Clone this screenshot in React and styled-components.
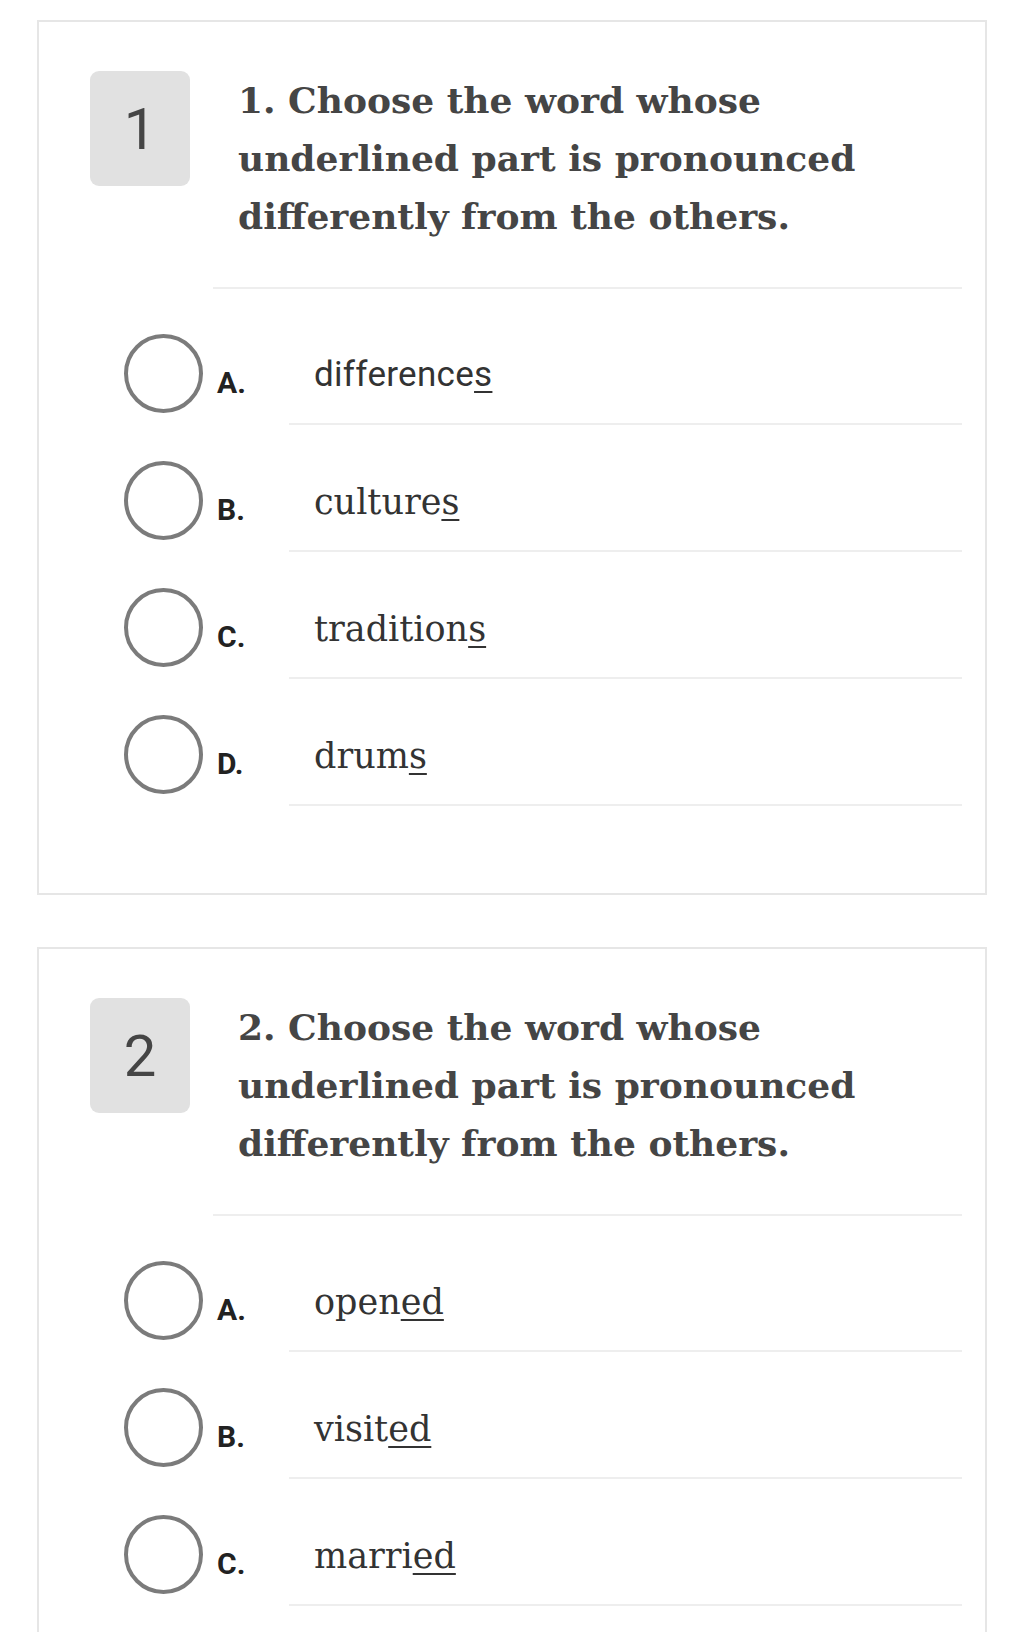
import React from "react";
import styled, { createGlobalStyle } from "styled-components";

const questions = [
  {
    num: 1,
    text: "1. Choose the word whose underlined part is pronounced differently from the others.",
    options: [
      { key: "A", base: "difference", mark: "s", sans: true },
      { key: "B", base: "culture", mark: "s" },
      { key: "C", base: "tradition", mark: "s" },
      { key: "D", base: "drum", mark: "s" },
    ],
  },
  {
    num: 2,
    text: "2. Choose the word whose underlined part is pronounced differently from the others.",
    options: [
      { key: "A", base: "open", mark: "ed" },
      { key: "B", base: "visit", mark: "ed" },
      { key: "C", base: "marri", mark: "ed" },
    ],
  },
];

function App() {
  return (
    <>
      <GlobalStyle />
      <Page>
        {questions.map((q) => (
          <Card key={q.num}>
            <Header>
              <Badge>{q.num}</Badge>
              <QuestionBlock>
                <QuestionText>{q.text}</QuestionText>
              </QuestionBlock>
            </Header>
            <OptionList>
              {q.options.map((o) => (
                <OptionRow key={o.key}>
                  <Radio />
                  <Letter>{o.key}.</Letter>
                  <OptionBody>
                    <OptionText $sans={o.sans}>
                      {o.base}
                      <Mark>{o.mark}</Mark>
                    </OptionText>
                  </OptionBody>
                </OptionRow>
              ))}
            </OptionList>
          </Card>
        ))}
      </Page>
    </>
  );
}

export default App;

const GlobalStyle = createGlobalStyle`
  body {
    margin: 0;
    background: #ffffff;
    font-family: Roboto, "Liberation Sans", sans-serif;
  }
`;

const Page = styled.div`
  display: flex;
  flex-direction: column;
  gap: 52px;
  padding: 20px 37px 0 37px;
`;

const Card = styled.div`
  border: 2px solid #e6e6e6;
  padding: 49px 23px 87px 51px;
`;

const Header = styled.div`
  display: flex;
  gap: 23px;
`;

const Badge = styled.div`
  flex: none;
  width: 100px;
  height: 115px;
  border-radius: 9px;
  background: #e1e1e1;
  color: #454545;
  font-family: Roboto, sans-serif;
  font-weight: 400;
  font-size: 58px;
  display: flex;
  align-items: center;
  justify-content: center;
`;

const QuestionBlock = styled.div`
  flex: 1;
  padding: 0 0 42px 25px;
  border-bottom: 2px solid #eeeeee;
`;

const QuestionText = styled.div`
  font-family: "DejaVu Serif", serif;
  font-weight: bold;
  font-size: 36px;
  line-height: 58px;
  color: #454545;
`;

const OptionList = styled.div`
  display: flex;
  flex-direction: column;
  margin: 9px 0 0 34px;
`;

const OptionRow = styled.div`
  display: flex;
  align-items: flex-start;
`;

const Radio = styled.div`
  flex: none;
  box-sizing: border-box;
  width: 79px;
  height: 79px;
  margin-top: 36px;
  border: 4px solid #7b7b7b;
  border-radius: 50%;
`;

const Letter = styled.div`
  flex: none;
  width: 86px;
  box-sizing: border-box;
  padding: 65px 0 0 14px;
  font-family: Roboto, sans-serif;
  font-weight: bold;
  font-size: 30px;
  line-height: 40px;
  color: #222222;
`;

const OptionBody = styled.div`
  flex: 1;
  padding: 57px 0 28px 25px;
  border-bottom: 2px solid #eeeeee;
`;

const OptionText = styled.div`
  font-family: ${(p) => (p.$sans ? 'Roboto, sans-serif' : '"DejaVu Serif", serif')};
  font-size: ${(p) => (p.$sans ? "35px" : "35px")};
  letter-spacing: ${(p) => (p.$sans ? "0.3px" : "0")};
  line-height: 40px;
  color: #333333;
`;

const Mark = styled.span`
  text-decoration: underline;
  text-decoration-thickness: 2px;
  text-underline-offset: 5px;
`;
